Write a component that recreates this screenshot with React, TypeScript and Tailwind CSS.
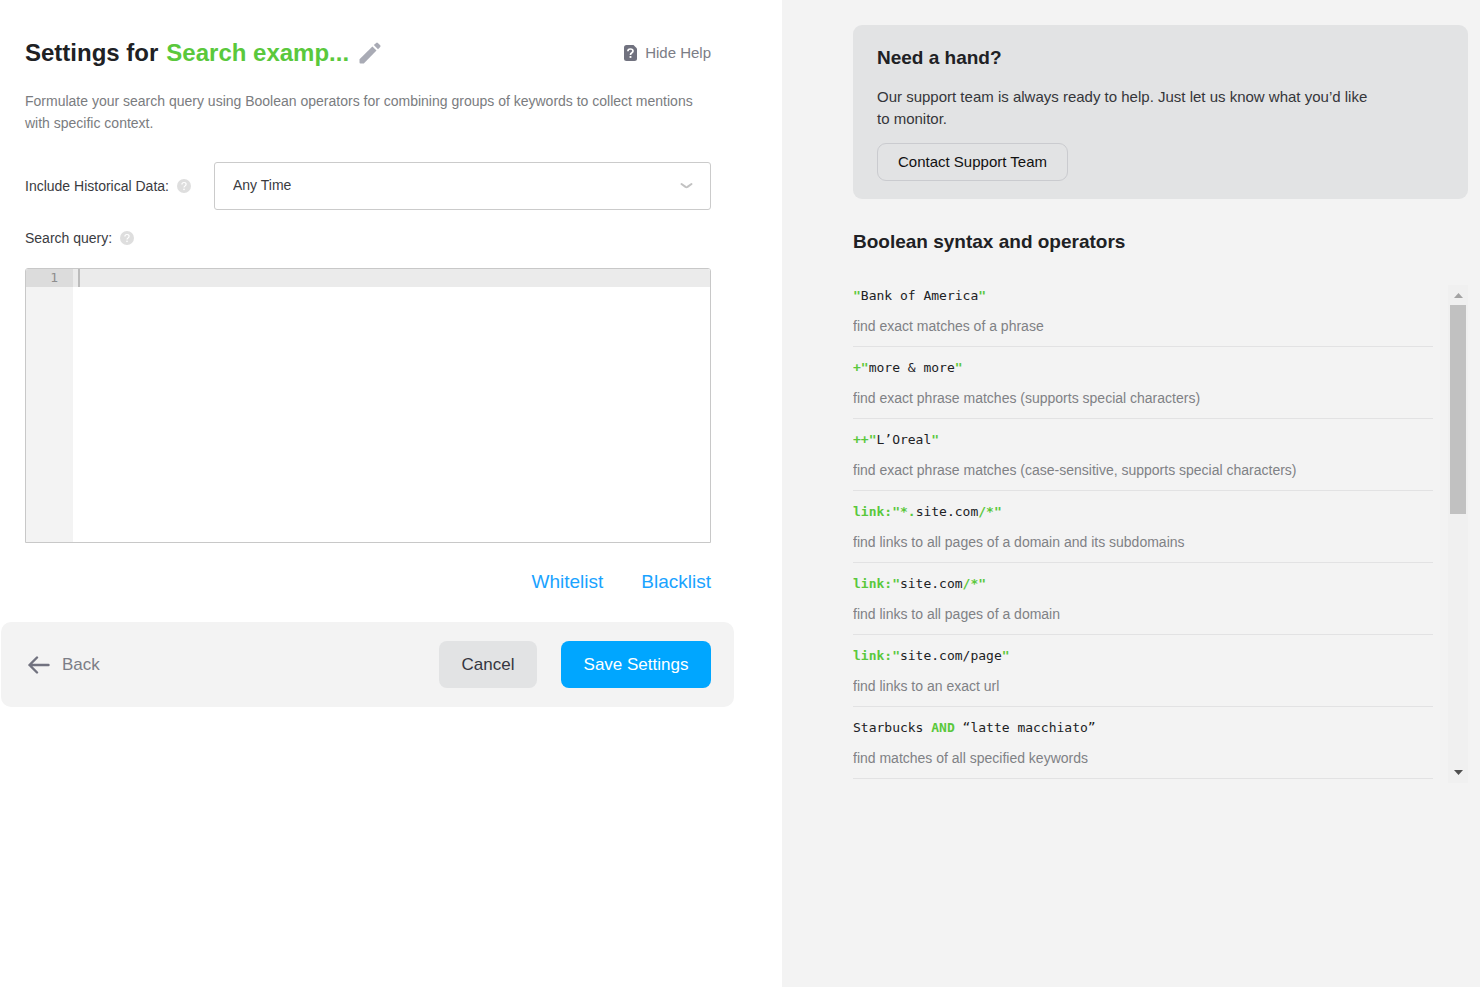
import { useState } from 'react';

type Part = { text: string; op?: boolean };

const operators: { code: Part[]; description: string }[] = [
  {
    code: [{ text: '"', op: true }, { text: 'Bank of America' }, { text: '"', op: true }],
    description: 'find exact matches of a phrase',
  },
  {
    code: [{ text: '+"', op: true }, { text: 'more & more' }, { text: '"', op: true }],
    description: 'find exact phrase matches (supports special characters)',
  },
  {
    code: [{ text: '++"', op: true }, { text: 'L’Oreal' }, { text: '"', op: true }],
    description: 'find exact phrase matches (case-sensitive, supports special characters)',
  },
  {
    code: [{ text: 'link:"*.', op: true }, { text: 'site.com' }, { text: '/*"', op: true }],
    description: 'find links to all pages of a domain and its subdomains',
  },
  {
    code: [{ text: 'link:"', op: true }, { text: 'site.com' }, { text: '/*"', op: true }],
    description: 'find links to all pages of a domain',
  },
  {
    code: [{ text: 'link:"', op: true }, { text: 'site.com/page' }, { text: '"', op: true }],
    description: 'find links to an exact url',
  },
  {
    code: [{ text: 'Starbucks ' }, { text: 'AND', op: true }, { text: ' “latte macchiato”' }],
    description: 'find matches of all specified keywords',
  },
];

const PencilIcon = () => (
  <svg width="22" height="22" viewBox="0 0 22 22" fill="#a9abb5" aria-hidden="true">
    <path d="M0.5 17.2 L13.4 4.5 L17.5 8.6 L4.8 21.5 H1.5 Q0.5 21.5 0.5 20.5 Z" />
    <path d="M14.8 3.1 L17.2 0.9 Q18 0.2 18.8 0.9 L21.2 3.3 Q21.9 4.1 21.2 4.9 L19 7.2 Z" />
  </svg>
);

const HelpPageIcon = () => (
  <svg width="13" height="16" viewBox="0 0 13 16" fill="none" aria-hidden="true">
    <path d="M2.5 0 H9.5 L13 3.5 V13.5 Q13 16 10.5 16 H2.5 Q0 16 0 13.5 V2.5 Q0 0 2.5 0 Z" fill="#71727f" />
    <path d="M3.9 6.2 Q3.9 4 6.4 4 Q9 4 9 6.1 Q9 7.2 7.6 8 Q6.5 8.6 6.5 9.9" stroke="#fff" strokeWidth="1.7" />
    <rect x="5.6" y="11" width="1.8" height="1.9" fill="#fff" />
  </svg>
);

const HintIcon = () => (
  <svg width="14" height="14" viewBox="0 0 14 14" fill="none" aria-hidden="true">
    <circle cx="7" cy="7" r="7" fill="#dedede" />
    <path d="M4.9 5.4 Q4.9 3.5 7 3.5 Q9.1 3.5 9.1 5.3 Q9.1 6.3 8 7 Q7 7.6 7 8.6" stroke="#fff" strokeWidth="1.2" />
    <circle cx="7" cy="10.4" r="0.8" fill="#fff" />
  </svg>
);

const ArrowLeftIcon = () => (
  <svg width="23" height="18" viewBox="0 0 23 18" fill="none" stroke="#71727f" strokeWidth="2.4" strokeLinecap="round" strokeLinejoin="round" aria-hidden="true">
    <path d="M10 1.5 L2.5 9 L10 16.5 M2.5 9 H21.5" />
  </svg>
);

const SettingsForm = () => {
  const [query, setQuery] = useState('');

  return (
    <section className="pt-[37px]">
      <div className="pl-[25px] pr-[71px]">
        <header className="flex items-center justify-between">
          <div className="flex items-center gap-2">
            <h1 className="text-2xl font-bold text-[#202124]">Settings for</h1>
            <span className="text-2xl font-bold text-[#5ac83c]">Search examp...</span>
            <button type="button" aria-label="Rename search" className="ml-0.5">
              <PencilIcon />
            </button>
          </div>
          <button type="button" className="flex items-center gap-2 text-[15px] text-[#7b7d86]">
            <HelpPageIcon />
            Hide Help
          </button>
        </header>

        <p className="mt-[21px] text-sm leading-[22px] text-[#7a7c80]">
          Formulate your search query using Boolean operators for combining groups of keywords to collect mentions
          with specific context.
        </p>

        <div className="mt-7 flex items-center">
          <div className="flex w-[189px] items-center gap-2">
            <label htmlFor="history" className="text-sm text-[#3a3b3f]">Include Historical Data:</label>
            <HintIcon />
          </div>
          <div className="relative flex-1">
            <select
              id="history"
              className="block h-12 w-full appearance-none rounded-[3px] border border-[#cbcbcb] bg-white pr-10 pb-0.5 pl-[18px] text-sm text-[#3a3b3f]"
            >
              <option>Any Time</option>
            </select>
            <svg className="pointer-events-none absolute top-5 right-[18px]" width="13" height="8" viewBox="0 0 13 8" fill="none" stroke="#c2c2c2" strokeWidth="2" strokeLinecap="round" strokeLinejoin="round" aria-hidden="true">
              <path d="M1.5 2 L5.5 4.9 Q6.5 5.5 7.5 4.9 L11.5 2" />
            </svg>
          </div>
        </div>

        <div className="mt-[18px] flex items-center gap-2">
          <label htmlFor="query" className="text-sm text-[#3a3b3f]">Search query:</label>
          <HintIcon />
        </div>

        {/* Query editor */}
        <div className="relative mt-5 flex h-[275px] overflow-hidden rounded-t-[3px] border border-[#c8c8c8]">
          <div className="w-[47px] bg-[#f3f3f3] font-['DejaVu_Sans_Mono',monospace] text-[13px] text-[#8e8e8e]">
            <div className="bg-[#dcdcdc] pr-[15px] text-right leading-[18px]">1</div>
          </div>
          <textarea
            id="query"
            value={query}
            onChange={(e) => setQuery(e.target.value)}
            className="flex-1 resize-none bg-white bg-[linear-gradient(#ebebeb,#ebebeb)] bg-[length:100%_18px] bg-no-repeat px-1 font-['DejaVu_Sans_Mono',monospace] text-[13px] leading-[18px] outline-none"
          />
          <span className="absolute top-0 left-[52px] h-[18px] w-0.5 bg-[#bcbcbc]" />
        </div>

        <div className="mt-[25px] flex justify-end gap-[38px] text-[19px] leading-7 text-[#1aa3ff]">
          <a href="#whitelist">Whitelist</a>
          <a href="#blacklist">Blacklist</a>
        </div>
      </div>

      <footer className="mt-[26px] mr-12 ml-px flex h-[85px] items-center rounded-[10px] bg-[#f3f3f3] pr-[23px] pl-[26px]">
        <button type="button" className="flex items-center gap-3 text-[17px] text-[#7b7d86]">
          <ArrowLeftIcon />
          Back
        </button>
        <button type="button" className="ml-auto h-[47px] w-[98px] rounded-lg bg-[#e2e3e4] text-[17px] text-[#35363f]">
          Cancel
        </button>
        <button type="button" className="ml-6 h-[47px] w-[150px] rounded-lg bg-[#00a6ff] text-[17px] text-white">
          Save Settings
        </button>
      </footer>
    </section>
  );
};

const HelpPanel = () => (
  <aside className="bg-[#f3f3f3] pt-[25px] pr-3 pb-6 pl-[71px]">
    <div className="rounded-[9px] bg-[#e2e3e4] px-6 pt-[21px] pb-[18px]">
      <h2 className="text-[19px] leading-6 font-bold text-[#202124]">Need a hand?</h2>
      <p className="mt-4 max-w-[504px] text-[15px] leading-[22px] text-[#35363a]">
        Our support team is always ready to help. Just let us know what you’d like to monitor.
      </p>
      <button type="button" className="mt-[13px] h-[38px] rounded-[9px] border border-[#cacbcf] px-5 text-[15px] text-[#111]">
        Contact Support Team
      </button>
    </div>

    <h2 className="mt-[31px] text-[19px] leading-6 font-bold text-[#202124]">Boolean syntax and operators</h2>

    <div className="mt-[31px] flex h-[498px] gap-[15px]">
      <ul className="flex-1 overflow-hidden">
        {operators.map((item) => (
          <li key={item.description} className="border-b border-[#e2e2e3] pt-[11px] pb-[9px] first:pt-px">
            <code className="block font-['DejaVu_Sans_Mono',monospace] text-[13px] leading-5 whitespace-pre text-[#202124]">
              {item.code.map((part, i) => (
                <span key={i} className={part.op ? 'font-bold text-[#5ac83c]' : ''}>{part.text}</span>
              ))}
            </code>
            <p className="mt-[9px] text-sm leading-[22px] text-[#7f8185]">{item.description}</p>
          </li>
        ))}
      </ul>

      {/* Scrollbar */}
      <div className="flex w-5 flex-col items-center bg-[#f0f0f0]" aria-hidden="true">
        <svg width="9" height="20" viewBox="0 0 9 20" fill="#a3a3a3">
          <path d="M0 13 L4.5 8 L9 13 Z" />
        </svg>
        <div className="h-[209px] w-4 bg-[#c1c1c1]" />
        <svg className="mt-auto" width="9" height="20" viewBox="0 0 9 20" fill="#505050">
          <path d="M0 7 L4.5 12 L9 7 Z" />
        </svg>
      </div>
    </div>
  </aside>
);

const App = () => (
  <main className="grid min-h-screen grid-cols-[782fr_698fr] bg-white font-['Liberation_Sans',Arial,sans-serif]">
    <SettingsForm />
    <HelpPanel />
  </main>
);

export default App;
